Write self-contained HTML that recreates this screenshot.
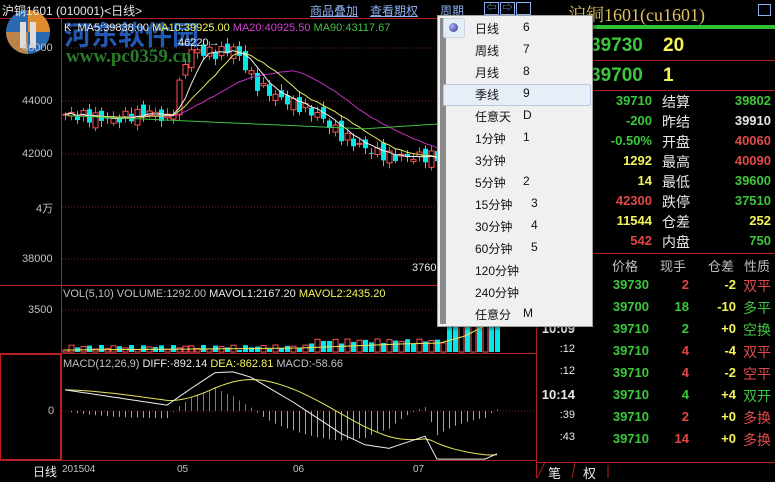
<!DOCTYPE html>
<html><head><meta charset="utf-8">
<style>
*{margin:0;padding:0;box-sizing:border-box}
body{width:775px;height:478px;background:#000;overflow:hidden;position:relative;font-family:"Liberation Sans","Noto Sans CJK SC",sans-serif;color:#ddd;font-size:12px}
.a{position:absolute;white-space:nowrap}
.g{color:#3cc83c}.y{color:#f4f45a}.r{color:#e04848}.w{color:#e8e8e8}.c{color:#c0c0c0}
.menu{position:absolute;left:437px;top:15px;width:156px;height:312px;background:#f0f0f0;border:1px solid #a0a0a0;box-shadow:2px 2px 3px rgba(0,0,0,.4)}
.menu .bar{position:absolute;left:2px;top:2px;width:6px;height:306px;background:#8a8a8a}
</style></head><body>
<svg class="a" style="left:0;top:0" width="775" height="478">
 <line x1="0" y1="18.5" x2="536" y2="18.5" stroke="#b02020"/>
 <line x1="61.5" y1="18" x2="61.5" y2="460" stroke="#b02020"/>
 <line x1="0" y1="285.5" x2="536" y2="285.5" stroke="#b02020"/>
 <line x1="0" y1="353.5" x2="536" y2="353.5" stroke="#b02020"/>
 <line x1="0" y1="460.5" x2="536" y2="460.5" stroke="#b02020"/>
 <line x1="536.5" y1="18" x2="536.5" y2="478" stroke="#b02020"/>
 <rect x="0.5" y="354.5" width="60" height="105" fill="none" stroke="#c02020"/>
 <g stroke="#802020" stroke-dasharray="1,2">
  <line x1="62" y1="48" x2="536" y2="48"/><line x1="62" y1="101" x2="536" y2="101"/>
  <line x1="62" y1="154" x2="536" y2="154"/><line x1="62" y1="207" x2="536" y2="207"/>
  <line x1="62" y1="259" x2="536" y2="259"/><line x1="62" y1="310" x2="536" y2="310"/>
  <line x1="62" y1="411" x2="536" y2="411"/>
 </g>
 <rect x="540" y="25" width="235" height="4" fill="#30c030"/>
 <g stroke="#b02020">
  <line x1="536" y1="60.5" x2="775" y2="60.5"/><line x1="536" y1="90.5" x2="775" y2="90.5"/>
  <line x1="536" y1="253.5" x2="775" y2="253.5"/><line x1="536" y1="462.5" x2="775" y2="462.5"/>
 </g>
 <path d="M537 478 L545 462 M572 478 L575 462 M608 478 L608 465" stroke="#b02020" fill="none"/>
 <g id="chart"></g>
</svg>

<svg class="a" style="left:4px;top:8px" width="48" height="48">
 <circle cx="24" cy="24" r="22" fill="#2a68b0"/>
 <path d="M24 2 A22 22 0 0 1 46 24 L24 24 Z" fill="#e08a30"/>
 <path d="M2 24 A22 22 0 0 0 24 46 L24 24 Z" fill="#e08a30" opacity=".8"/>
 <rect x="16" y="14" width="6" height="26" fill="#ddd"/><rect x="26" y="14" width="6" height="26" fill="#ddd"/>
</svg>
<div class="a" style="left:64px;top:14px;font-size:27px;font-weight:bold;color:#2a6ad0;opacity:.85">河东软件园</div>
<div class="a" style="left:66px;top:46px;font-family:'Liberation Serif',serif;font-size:19px;font-weight:bold;color:#2e8a2e;opacity:.9">www.pc0359.cn</div>

<div class="a w" style="left:2px;top:2px;font-size:12px">沪铜1601 (010001)&lt;日线&gt;</div>
<div class="a" style="left:310px;top:2px;color:#8fb0f0;text-decoration:underline">商品叠加</div>
<div class="a" style="left:370px;top:2px;color:#8fb0f0;text-decoration:underline">查看期权</div>
<div class="a" style="left:440px;top:2px;color:#8fb0f0;text-decoration:underline">周期</div>
<div class="a" style="left:484px;top:2px;width:15px;height:13px;border:1px solid #8fb0f0;color:#8fb0f0;font-size:10px;line-height:11px;text-align:center">⇦</div>
<div class="a" style="left:500px;top:2px;width:15px;height:13px;border:1px solid #8fb0f0;color:#8fb0f0;font-size:10px;line-height:11px;text-align:center">⇨</div>
<div class="a" style="left:516px;top:2px;width:15px;height:13px;border:1px solid #8fb0f0"></div>

<div class="a" style="left:64px;top:22px;font-size:11px"><span class="w">K &nbsp;MA5:39838.00 </span><span class="y">MA10:39925.00 </span><span style="color:#d040d0">MA20:40925.50 </span><span style="color:#40c040">MA90:43117.67</span></div>
<div class="a w" style="left:178px;top:37px;font-size:11px">46220→</div>
<div class="a c" style="left:22px;top:42px;font-size:11px">46000</div>
<div class="a c" style="left:22px;top:95px;font-size:11px">44000</div>
<div class="a c" style="left:22px;top:148px;font-size:11px">42000</div>
<div class="a c" style="left:36px;top:200px;font-size:11px">4万</div>
<div class="a c" style="left:22px;top:253px;font-size:11px">38000</div>
<div class="a w" style="left:412px;top:262px;font-size:11px">3760</div>
<div class="a" style="left:63px;top:288px;font-size:11px"><span class="c">VOL(5,10) VOLUME:1292.00 </span><span class="w">MAVOL1:2167.20 </span><span class="y">MAVOL2:2435.20</span></div>
<div class="a c" style="left:28px;top:304px;font-size:11px">3500</div>
<div class="a" style="left:63px;top:358px;font-size:11px"><span class="c">MACD(12,26,9) </span><span class="w">DIFF:-892.14 </span><span class="y">DEA:-862.81 </span><span class="c">MACD:-58.66</span></div>
<div class="a c" style="left:48px;top:405px;font-size:11px">0</div>
<div class="a w" style="left:33px;top:463px;font-size:12px">日线</div>
<div class="a c" style="left:62px;top:464px;font-size:10px">201504</div>
<div class="a c" style="left:177px;top:464px;font-size:10px">05</div>
<div class="a c" style="left:293px;top:464px;font-size:10px">06</div>
<div class="a c" style="left:413px;top:464px;font-size:10px">07</div>

<div class="a" style="left:568px;top:1px;font-family:'Liberation Serif','Noto Serif CJK SC',serif;font-size:18px;color:#e0c060">沪铜1601(cu1601)</div>
<div class="a" style="left:758px;top:4px;width:13px;height:12px;border:1px solid #8fb0f0"></div>
<div class="a g" style="left:590px;top:35px;font-size:19px;font-weight:bold">39730</div>
<div class="a y" style="left:663px;top:35px;font-size:19px;font-weight:bold">20</div>
<div class="a g" style="left:590px;top:65px;font-size:19px;font-weight:bold">39700</div>
<div class="a y" style="left:663px;top:65px;font-size:19px;font-weight:bold">1</div>
<div id="stats"></div>
<div class="a c" style="left:612px;top:256px;font-size:13px">价格</div>
<div class="a c" style="left:660px;top:256px;font-size:13px">现手</div>
<div class="a c" style="left:708px;top:256px;font-size:13px">仓差</div>
<div class="a c" style="left:744px;top:256px;font-size:13px">性质</div>
<div id="trades"></div>
<div class="a w" style="left:548px;top:463px;font-size:13px">笔</div>
<div class="a w" style="left:583px;top:463px;font-size:13px">权</div>

<div class="menu"><div class="bar"></div>
 <div class="a" style="left:5px;top:2px;width:22px;height:20px;background:#e4ecf6;border:1px solid #c8d4e4;border-radius:2px"></div>
 <div class="a" style="left:11px;top:7px;width:9px;height:9px;border-radius:50%;background:radial-gradient(circle at 35% 35%,#aab0ff,#303080)"></div>
 <div class="a" style="left:5px;top:68px;width:148px;height:22px;background:#e8eef8;border:1px solid #b8c8e0;border-radius:2px"></div>
</div>
<div id="mi"></div>

<script>
(function(){
var ns="http://www.w3.org/2000/svg",g=document.getElementById("chart");
function el(t,a){var e=document.createElementNS(ns,t);for(var k in a)e.setAttribute(k,a[k]);g.appendChild(e);return e;}
function interp(pts,i){for(var j=0;j<pts.length-1;j++){if(i>=pts[j][0]&&i<=pts[j+1][0]){var t=(i-pts[j][0])/(pts[j+1][0]-pts[j][0]);return pts[j][1]+t*(pts[j+1][1]-pts[j][1]);}}return pts[pts.length-1][1];}
var pts=[[0,43500],[8,43300],[14,43600],[17,43300],[18,43700],[20,45500],[21,45900],[25,45800],[28,46000],[30,45300],[32,44600],[35,44200],[38,43900],[42,43500],[46,42700],[50,42200],[54,41900],[62,41900],[66,41200],[72,39700]];
var N=73,c=[];
for(var i=0;i<N;i++)c.push(interp(pts,i)+Math.sin(i*2.7)*220);
function Y(p){return 48+(46000-p)*0.0265}
function X(i){return 65+i*6}
var ma=function(n){var r=[];for(var i=0;i<N;i++){var s=0,m=0;for(var k=Math.max(0,i-n+1);k<=i;k++){s+=c[k];m++}r.push(s/m)}return r};
function line(a,col){var d="";for(var i=0;i<N;i++)d+=(i?"L":"M")+X(i)+" "+Y(a[i]).toFixed(1);el("path",{d:d,stroke:col,fill:"none","stroke-width":1});}
for(var i=0;i<N;i++){var o=i?c[i-1]+Math.cos(i*1.9)*200:c[0];var cl=c[i];var up=cl>=o;var hi=Math.max(o,cl)+80+Math.abs(Math.sin(i))*150,lo=Math.min(o,cl)-80-Math.abs(Math.cos(i))*150;
var col=up?"#ff5050":"#00e8e8";el("line",{x1:X(i)+.5,y1:Y(hi),x2:X(i)+.5,y2:Y(lo),stroke:col});
var y1=Y(Math.max(o,cl)),h=Math.max(1,Y(Math.min(o,cl))-y1);
el("rect",{x:X(i)-2,y:y1,width:5,height:h,fill:up?"#000":col,stroke:col,"stroke-width":up?1:0});}
line(ma(20),"#c030c0");line(ma(10),"#e8e860");line(ma(5),"#f0f0f0");
var m90=[];for(var i=0;i<N;i++)m90.push(43450-i*10+(i>50?(i-50)*25:0));line(m90,"#40c040");
for(var i=0;i<N;i++){var v=2+Math.abs(Math.sin(i*1.3))*5+(i>40?6:0)+(i>63?20+Math.abs(Math.sin(i))*15:0);var up=c[i]>=(i?c[i-1]:c[0]);var col=up?"#ff5050":"#00e8e8";
el("rect",{x:X(i)-2,y:352-v,width:5,height:v,fill:up?"#000":col,stroke:col,"stroke-width":up?1:0});}
el("path",{d:"M64 350 L200 349 L300 348 L400 344 L440 343 L465 336 L500 318",stroke:"#e8e860",fill:"none"});
var dp=[[0,470],[17,130],[21,500],[25,850],[28,870],[31,750],[38,200],[46,-500],[50,-750],[54,-830],[60,-560],[62,-1070],[70,-1070],[72,-950]];
var dif=[],dea=[];for(var i=0;i<N;i++)dif.push(interp(dp,i));
var e=dif[0];for(var i=0;i<N;i++){e=e+(dif[i]-e)*0.15;dea.push(e);}
function MY(v){return 411-v*0.045}
for(var i=0;i<N;i++){var h=(dif[i]-dea[i])*1.5;el("line",{x1:X(i)+.5,y1:MY(0),x2:X(i)+.5,y2:MY(h),stroke:h>0?"#e05050":"#60c0c8"});}
var d1="",d2="";for(var i=0;i<N;i++){d1+=(i?"L":"M")+X(i)+" "+MY(dif[i]).toFixed(1);d2+=(i?"L":"M")+X(i)+" "+MY(dea[i]).toFixed(1);}
el("path",{d:d2,stroke:"#e8e860",fill:"none"});el("path",{d:d1,stroke:"#f0f0f0",fill:"none"});
var S=[["39710","g","结算","39802","g"],["-200","g","昨结","39910","w"],["-0.50%","g","开盘","40060","r"],["1292","y","最高","40090","r"],["14","y","最低","39600","g"],["42300","r","跌停","37510","g"],["11544","y","仓差","252","y"],["542","r","内盘","750","g"]];
var h="";S.forEach(function(s,i){var t=93+i*20;h+='<div class="a '+s[1]+'" style="right:123px;top:'+t+'px;font-size:13px;font-weight:bold">'+s[0]+'</div><div class="a w" style="left:662px;top:'+(t-1)+'px;font-size:14px">'+s[2]+'</div><div class="a '+s[4]+'" style="right:4px;top:'+t+'px;font-size:13px;font-weight:bold">'+s[3]+'</div>';});
document.getElementById("stats").innerHTML=h;
var T=[["","39730","2","r","-2","双平","r"],["","39700","18","g","-10","多平","g"],["10:09","39710","2","g","+0","空换","g"],[":12","39710","4","r","-4","双平","r"],[":12","39710","4","r","-2","空平","r"],["10:14","39710","4","g","+4","双开","g"],[":39","39710","2","r","+0","多换","r"],[":43","39710","14","r","+0","多换","r"]];
h="";T.forEach(function(s,i){var t=277+i*22;h+='<div class="a w" style="right:200px;top:'+t+'px;font-size:'+(s[0].length>3?13:11)+'px;font-weight:'+(s[0].length>3?'bold':'normal')+'">'+s[0]+'</div><div class="a g" style="right:126px;top:'+t+'px;font-size:13px;font-weight:bold">'+s[1]+'</div><div class="a '+s[3]+'" style="right:86px;top:'+t+'px;font-size:13px;font-weight:bold">'+s[2]+'</div><div class="a y" style="right:39px;top:'+t+'px;font-size:13px;font-weight:bold">'+s[4]+'</div><div class="a '+s[6]+'" style="left:743px;top:'+(t-1)+'px;font-size:14px">'+s[5]+'</div>';});
document.getElementById("trades").innerHTML=h;
var M=[["日线","6"],["周线","7"],["月线","8"],["季线","9"],["任意天","D"],["1分钟","1"],["3分钟",""],["5分钟","2"],["15分钟","3"],["30分钟","4"],["60分钟","5"],["120分钟",""],["240分钟",""],["任意分","M"]];
h="";M.forEach(function(m,i){h+='<div class="a" style="left:475px;top:'+(20+i*22)+'px;font-size:12px;color:#111">'+m[0]+'</div><div class="a" style="left:'+(m[0].length>3?531:523)+'px;top:'+(20+i*22)+'px;font-size:12px;color:#111">'+m[1]+'</div>';});
document.getElementById("mi").innerHTML=h;
})();
</script>
</body></html>
